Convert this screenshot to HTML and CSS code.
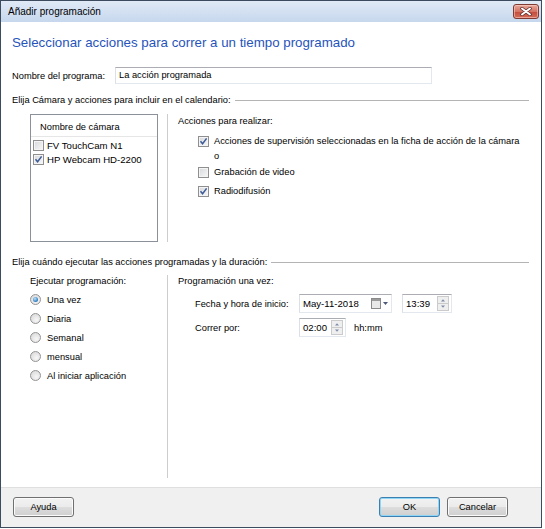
FILE: index.html
```html
<!DOCTYPE html>
<html lang="es">
<head>
    <meta charset="UTF-8">
    <meta name="viewport" content="width=device-width, initial-scale=1.0">
    <title>Añadir programación</title>
    <link rel="stylesheet" href="styles.css">
</head>
<body>
<div class="window">
    <div class="titlebar">
        <span class="title">Añadir programación</span>
        <span class="close">
            <svg width="12" height="9" viewBox="0 0 12 9">
                <path d="M2 1.5 L10 7.5 M10 1.5 L2 7.5" stroke="#5a2a2a" stroke-width="3.4" stroke-linecap="round"/>
                <path d="M2 1.5 L10 7.5 M10 1.5 L2 7.5" stroke="#fff" stroke-width="2" stroke-linecap="round"/>
            </svg>
        </span>
    </div>

    <div class="content">
        <h1 class="instruction">Seleccionar acciones para correr a un tiempo programado</h1>

        <div class="name-row">
            <span class="name-label">Nombre del programa:</span>
            <span class="textbox">La acción programada</span>
        </div>

        <div class="section"><span>Elija Cámara y acciones para incluir en el calendario:</span></div>

        <div class="group cams">
            <div class="listbox">
                <div class="list-head">Nombre de cámara</div>
                <div class="list-item"><span class="check"></span>FV TouchCam N1</div>
                <div class="list-item"><span class="check"><svg width="9" height="9" viewBox="0 0 9 9"><path d="M1.5 4.2 L3.6 6.8 L7.6 1.4" fill="none" stroke="#3d5a98" stroke-width="1.5"/></svg></span>HP Webcam HD-2200</div>
            </div>
            <div class="pane">
                <div class="pane-title">Acciones para realizar:</div>
                <div class="opts">
                    <div class="opt first"><span class="check"><svg width="9" height="9" viewBox="0 0 9 9"><path d="M1.5 4.2 L3.6 6.8 L7.6 1.4" fill="none" stroke="#3d5a98" stroke-width="1.5"/></svg></span><span>Acciones de supervisión seleccionadas en la ficha de acción de la cámara<br>o</span></div>
                    <div class="opt"><span class="check"></span><span>Grabación de video</span></div>
                    <div class="opt"><span class="check"><svg width="9" height="9" viewBox="0 0 9 9"><path d="M1.5 4.2 L3.6 6.8 L7.6 1.4" fill="none" stroke="#3d5a98" stroke-width="1.5"/></svg></span><span>Radiodifusión</span></div>
                </div>
            </div>
        </div>

        <div class="section second"><span>Elija cuándo ejecutar las acciones programadas y la duración:</span></div>

        <div class="group sched">
            <div class="run-col">
                <div class="pane-title">Ejecutar programación:</div>
                <div class="radios">
                    <div class="radio-row"><span class="radio on"></span>Una vez</div>
                    <div class="radio-row"><span class="radio"></span>Diaria</div>
                    <div class="radio-row"><span class="radio"></span>Semanal</div>
                    <div class="radio-row"><span class="radio"></span>mensual</div>
                    <div class="radio-row"><span class="radio"></span>Al iniciar aplicación</div>
                </div>
            </div>
            <div class="pane">
                <div class="pane-title">Programación una vez:</div>
                <div class="time-grid">
                    <span>Fecha y hora de inicio:</span>
                    <div class="controls">
                        <span class="field date">
                            <span class="field-text">May-11-2018</span>
                            <svg class="cal" width="18" height="11" viewBox="0 0 18 11">
                                <rect x="0.5" y="0.5" width="9" height="10" fill="#e8e8e8" stroke="#8a8a8a"/>
                                <rect x="1" y="1" width="8" height="2" fill="#9a9a9a"/>
                                <path d="M12 4 h5 l-2.5 3 z" fill="#4a5a78"/>
                            </svg>
                        </span>
                        <span class="field time">
                            <span class="field-text">13:39</span>
                            <svg width="12" height="15" viewBox="0 0 12 15">
                                <rect x="0.5" y="0.5" width="11" height="14" fill="#efefef" stroke="#cbcbcb"/>
                                <line x1="1" y1="7.5" x2="11" y2="7.5" stroke="#cbcbcb"/>
                                <path d="M4 5.5 h4 l-2 -2.2 z" fill="#7d8ca8"/>
                                <path d="M4 9.5 h4 l-2 2.2 z" fill="#7d8ca8"/>
                            </svg>
                        </span>
                    </div>
                    <span>Correr por:</span>
                    <div class="controls">
                        <span class="field dur">
                            <span class="field-text">02:00</span>
                            <svg width="12" height="15" viewBox="0 0 12 15">
                                <rect x="0.5" y="0.5" width="11" height="14" fill="#efefef" stroke="#cbcbcb"/>
                                <line x1="1" y1="7.5" x2="11" y2="7.5" stroke="#cbcbcb"/>
                                <path d="M4 5.5 h4 l-2 -2.2 z" fill="#7d8ca8"/>
                                <path d="M4 9.5 h4 l-2 2.2 z" fill="#7d8ca8"/>
                            </svg>
                        </span>
                        <span class="unit">hh:mm</span>
                    </div>
                </div>
            </div>
        </div>
    </div>

    <div class="footer">
        <button class="btn">Ayuda</button>
        <div class="footer-right">
            <button class="btn default">OK</button>
            <button class="btn">Cancelar</button>
        </div>
    </div>
</div>
</body>
</html>
```

FILE: styles.css
```css
* {
    box-sizing: border-box;
}

body {
    margin: 0;
    background: #fff;
    font-family: "Liberation Sans", Arial, sans-serif;
    font-size: 9.3px;
    color: #000;
}

/* dialog frame */
.window {
    width: 542px;
    height: 528px;
    border: 1px solid #3d4b5e;
    display: flex;
    flex-direction: column;
    background: #fff;
}

.titlebar {
    height: 21px;
    flex: none;
    display: flex;
    align-items: center;
    justify-content: space-between;
    padding: 0 2px 0 7px;
    background: linear-gradient(#e0eaf6, #c6d7ed);
}

.title {
    font-size: 10px;
}

.close {
    width: 26px;
    height: 15px;
    display: flex;
    align-items: center;
    justify-content: center;
    border: 1px solid #7e3a33;
    border-radius: 3px;
    background: linear-gradient(#e8a89b, #d57364 50%, #c34b3b 51%, #d46c58);
    box-shadow: inset 0 0 0 1px rgba(255, 220, 210, 0.5);
}

.content {
    flex: 1;
    padding: 0 12px 0 11px;
}

.instruction {
    margin: 13px 0 0;
    font-size: 13.3px;
    line-height: 16px;
    font-weight: normal;
    color: #2654bb;
}

.name-row {
    display: flex;
    align-items: center;
    height: 17px;
    margin-top: 16px;
}

.name-label {
    width: 103px;
}

.textbox {
    width: 317px;
    height: 17px;
    padding: 0 3px;
    line-height: 15px;
    border: 1px solid #e2e8ee;
    border-top-color: #abadb3;
    border-left-color: #dbdfe6;
}

/* group captions with a rule after them */
.section {
    display: flex;
    align-items: center;
    line-height: 12px;
    margin-top: 10px;
}

.section::after {
    content: "";
    flex: 1;
    height: 1px;
    margin-left: 4px;
    background: #b4b4b4;
}

.section.second {
    margin-top: 14px;
}

.group {
    display: flex;
    margin-left: 18px;
}

.cams {
    height: 128px;
    margin-top: 8px;
}

.sched {
    height: 203px;
    margin-top: 7px;
}

.pane {
    flex: 1;
    border-left: 1px solid #cdcdcd;
    padding-left: 10px;
}

.pane-title {
    line-height: 12px;
}

.cams .pane-title {
    margin-top: 1px;
}

/* camera list */
.listbox {
    width: 128px;
    margin-right: 9px;
    border: 1px solid #8c9098;
}

.list-head {
    height: 22px;
    padding: 4px 0 0 9px;
    line-height: 16px;
    border-bottom: 1px solid #e6e6e6;
}

.list-item {
    display: flex;
    align-items: center;
    height: 14px;
    padding-left: 2px;
    font-size: 9.6px;
}

.list-item:first-of-type {
    margin-top: 1px;
}

.list-head + .list-item {
    margin-top: 1px;
}

.check {
    width: 11px;
    height: 11px;
    flex: none;
    display: flex;
    align-items: center;
    justify-content: center;
    margin-right: 3px;
    border: 1px solid #8f8f8f;
    background: linear-gradient(135deg, #d6d8db, #f8f8f8);
    box-shadow: inset 0 0 0 1px #f4f4f4;
}

.opts {
    margin-top: 7px;
    padding-left: 20px;
}

.opt {
    display: flex;
    align-items: flex-start;
    line-height: 15px;
    margin-bottom: 4px;
}

.opt .check {
    margin-top: 2px;
    margin-right: 5px;
}

.opt.first {
    margin-bottom: 1px;
}

/* schedule */
.run-col {
    width: 137px;
}

.radios {
    padding-top: 3px;
}

.radio-row {
    display: flex;
    align-items: center;
    height: 19px;
}

.radio {
    width: 11px;
    height: 11px;
    flex: none;
    margin-right: 6px;
    border: 1px solid #939393;
    border-radius: 50%;
    background: radial-gradient(circle at 60% 65%, #f7f7f7, #d4d4d4);
    display: flex;
    align-items: center;
    justify-content: center;
}

.radio.on::after {
    content: "";
    width: 5px;
    height: 5px;
    border-radius: 50%;
    background: radial-gradient(circle at 40% 35%, #bfe4fb, #2a79c0 70%, #1a4f8a);
}

.time-grid {
    display: grid;
    grid-template-columns: 104px auto;
    grid-auto-rows: 19px;
    row-gap: 5px;
    align-items: center;
    margin-top: 7px;
    padding-left: 17px;
}

.controls {
    display: flex;
    align-items: center;
}

.field {
    height: 19px;
    display: flex;
    align-items: center;
    justify-content: space-between;
    padding: 0 2px 0 3px;
    border: 1px solid #e2e8ee;
    border-top-color: #abadb3;
    border-left-color: #dbdfe6;
}

.field-text {
    font-size: 9.6px;
}

.date {
    width: 93px;
    margin-right: 10px;
}

.time {
    width: 50px;
}

.dur {
    width: 47px;
    margin-right: 8px;
}

/* bottom button strip */
.footer {
    height: 40px;
    flex: none;
    display: flex;
    justify-content: space-between;
    padding: 9px 33px 0 12px;
    background: #f0f0f0;
    border-top: 1px solid #dfdfdf;
}

.footer-right {
    display: flex;
    gap: 7px;
}

.btn {
    width: 61px;
    height: 20px;
    padding: 0;
    font-family: inherit;
    font-size: 9.3px;
    color: #000;
    border: 1px solid #707070;
    border-radius: 3px;
    background: linear-gradient(#f2f2f2, #ebebeb 50%, #dddddd 51%, #cfcfcf);
    box-shadow: inset 0 0 0 1px #fbfbfb;
}

.btn.default {
    border-color: #3c7fb1;
    box-shadow: inset 0 0 0 1px #8fd6f6;
}
```
